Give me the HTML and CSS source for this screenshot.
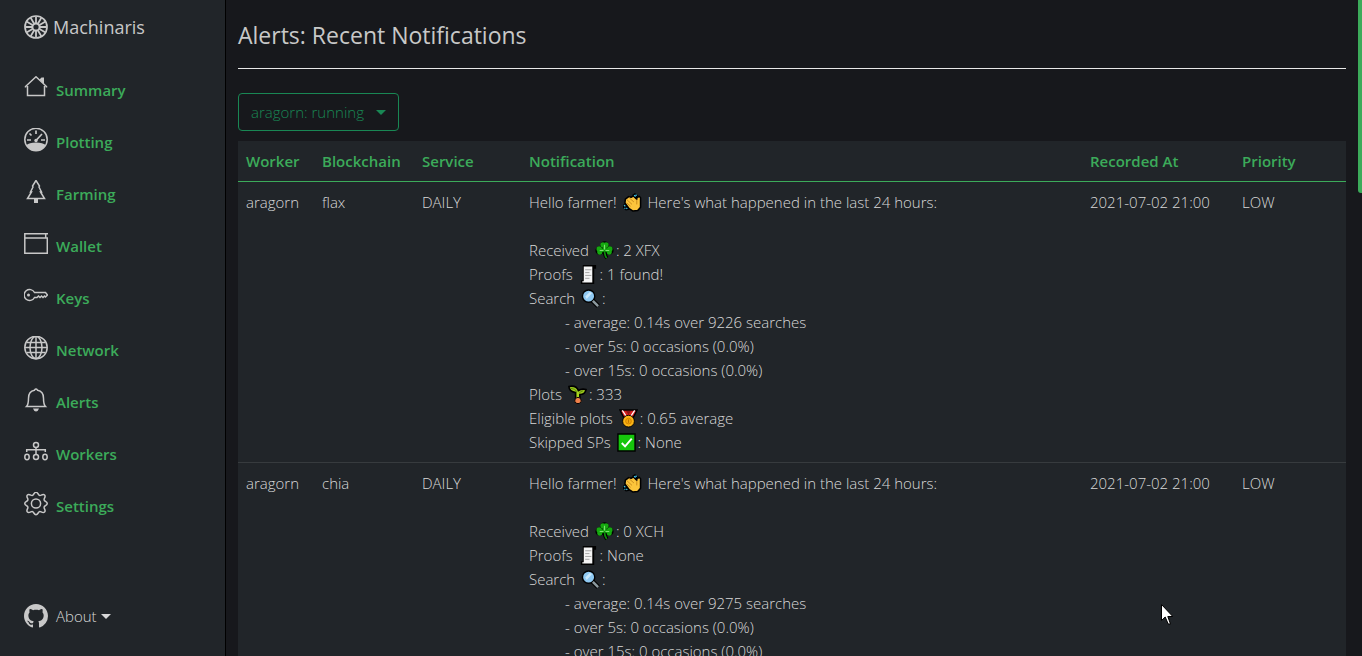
FILE: index.html
```html
<!DOCTYPE html>
<html lang="en">
<head>
<meta charset="utf-8">
<title>Machinaris - Alerts</title>
<link rel="stylesheet" href="styles.css">
</head>
<body>
<svg class="defs" aria-hidden="true">
  <symbol id="clap" viewBox="0 0 20 20">
    <path d="M2.500 6.500 6 3.800 8.500 4.500 11 3l3.500 3.500V5L17 3.500 18.500 5v10l-3 3.500-5 .5-4-2.500-4.500-6z" fill="#fcc53c" stroke="#000" stroke-width="1.600" stroke-linejoin="round"/>
    <path d="m4 7 5.500 5M6.500 5l5 4.500M4 10.500l4 3.500M14.500 7v5" stroke="#c98a1c" stroke-width="1" fill="none"/>
    <path d="m9.500 2 3-2L16 2.500 14 6l-2.500-2z" fill="#000"/>
    <path d="M0 12h3l4 5.500-4 1L0 15.500z" fill="#000"/>
    <path d="m11.700 2.300 1.500 1.500M13.800 1.500v1.700M1 13l1.500 1M3.500 15.700l1 1M1.500 16.300h1" stroke="#3fc6f0" stroke-width="1.300"/>
  </symbol>
  <symbol id="shamrock" viewBox="0 0 20 20">
    <g stroke="#000" stroke-width="2"><circle cx="10" cy="5" r="3.700"/><circle cx="5" cy="10" r="3.600"/><circle cx="15" cy="10" r="3.600"/><path d="M10 10q0 5 2.500 8" fill="none" stroke-width="4"/></g>
    <g fill="#16a810"><circle cx="8.300" cy="4" r="2.700"/><circle cx="11.700" cy="4" r="2.700"/><circle cx="4.400" cy="8.500" r="2.900"/><circle cx="5" cy="11.700" r="2.700"/><circle cx="15.600" cy="8.500" r="2.900"/><circle cx="15" cy="11.700" r="2.700"/><path d="M7 5h6l-1 3 3 0v4l-5-1-5 1V8l3.500 0z"/></g>
    <path d="M10 10q0 5 2.300 8" stroke="#0d8c0b" stroke-width="1.800" fill="none"/>
    <path d="M10 4v5M5 10h4M11 10h4" stroke="#7de070" stroke-width="1.200"/>
  </symbol>
  <symbol id="receipt" viewBox="0 0 20 20">
    <path d="M4 0h14v4h-2v16H2v-4h2z" fill="#000"/>
    <path d="M5 1.500h9v17H3.500V17H5z" fill="#f4f4f4"/>
    <path d="M6.500 5H13M6.500 8H11M6.500 11H13M6.500 14H11" stroke="#a2a2a2"/>
  </symbol>
  <symbol id="lens" viewBox="0 0 20 20">
    <path d="m12 12 6 6" stroke="#000" stroke-width="5"/>
    <circle cx="8" cy="7.500" r="6.500" fill="#8fc9f2" stroke="#000" stroke-width="1.500"/>
    <path d="m4.500 8 5-5 2 1.500-5.500 6z" fill="#c9e8fc"/>
    <path d="m12.500 12.500 5.500 5.500" stroke="#8c999e" stroke-width="2.600"/>
  </symbol>
  <symbol id="seedling" viewBox="0 0 20 20">
    <path d="M1 1.500q8-1.500 10 4.500 3-2.500 8-1.200-1 5.200-6.500 5.200V18H8V8Q1 6.500 1 1.500z" fill="#9fca1c" stroke="#000" stroke-width="1.700"/>
    <path d="M3 3.500q4 0 7 4v5M12 8l4-2" stroke="#5b8b10" fill="none"/>
    <path d="M10.500 7v8" stroke="#a9d51e" stroke-width="2"/>
    <path d="M7 17q0-4 3.500-4t3.500 4l-2 2.500H9z" fill="#f0804a" stroke="#000"/>
  </symbol>
  <symbol id="medal" viewBox="0 0 20 20">
    <path d="M1 1h18l-4 8H5z" fill="#d61f1f" stroke="#000" stroke-width="1.500"/>
    <path d="m3.500 1.500 4 6M16.500 1.500l-4 6" stroke="#fff" stroke-width="1.300"/>
    <path d="M7.500 2h5L10 6z" fill="#8e1515"/>
    <circle cx="10" cy="12.800" r="6.200" fill="#fbb416" stroke="#000" stroke-width="1"/>
    <circle cx="10" cy="12.800" r="3" fill="#f0a30a" stroke="#d08300"/>
    <path d="M10 11v3.500" stroke="#b87400"/>
  </symbol>
  <symbol id="tick" viewBox="0 0 20 20">
    <path d="M1 1h18v18H1z" fill="#16c60c" stroke="#000" stroke-width="1.500"/>
    <path d="m5 10.500 3.500 3.500L15.500 6" fill="none" stroke="#fff" stroke-width="2"/>
  </symbol>
</svg>

<div class="layout">
  <aside class="sidebar">
    <a class="brand" href="#">
      <svg class="icon" viewBox="0 0 24 24"><circle cx="12" cy="12" r="11" stroke-width="1.700"/><path d="M12 1.500V8M12 16v6.500M1.500 12H8M16 12h6.500M6.750 2.900 10 8.500M14 15.500l3.250 5.600M17.250 2.900 14 8.500M10 15.500l-3.250 5.600M2.900 6.750 8.500 10M15.500 14l5.600 3.250M2.900 17.250 8.500 14M15.500 10l5.600-3.250" stroke-width="1.800"/><circle cx="12" cy="12" r="3.600" stroke-width="2"/></svg>
      <span>Machinaris</span>
    </a>
    <nav class="menu">
      <a class="menu-link" href="#"><svg class="icon" viewBox="0 0 24 24"><path d="M3.500 10v9.500h17V10M1.500 11.500v-1L12 .8l10.500 9.700v1"/><path class="solid" d="m15.500 3.500 2-2H20V8z"/></svg>Summary</a>
      <a class="menu-link" href="#"><svg class="icon" viewBox="0 0 24 24"><circle cx="12" cy="11.500" r="11.200"/><path class="solid" d="M2.500 17Q5 14.500 12 14.500t9.500 2.500q-3 5.800-9.500 5.800T2.500 17z"/><path d="M12 2.500V6M5.500 5.500l2 2M3 12h4M17 12h4M11.500 13 18 6" stroke-width="1.700"/><circle class="solid" cx="12" cy="12.500" r="1.700"/></svg>Plotting</a>
      <a class="menu-link" href="#"><svg class="icon" viewBox="0 0 24 24"><path d="M12 .5 8.500 6l.5 1-2.500 5h1l-4 6.500h17L16.500 12h1L15 7l.5-1z"/><path class="solid" d="M10 19h4v4h-4z"/></svg>Farming</a>
      <a class="menu-link" href="#"><svg class="icon" viewBox="0 0 24 24"><path d="M.8 1V21.300h22.500V6H1.500M.8 1.700H24M21.700 2v4"/></svg>Wallet</a>
      <a class="menu-link" href="#"><svg class="icon" viewBox="0 0 24 24"><path d="M10.500 8.500h11l2 2.500-2 2-1-1-1.500 1.500-1.500-1.500-1.500 1.500-1.500-1.500-1.500 1.500h-2.500A5.500 5.500 0 1 1 10.500 8.500z"/><circle class="solid" cx="4.500" cy="11" r="1.500"/></svg>Keys</a>
      <a class="menu-link" href="#"><svg class="icon" viewBox="0 0 24 24"><circle cx="12" cy="11.500" r="11.200"/><ellipse cx="12" cy="11.500" rx="6" ry="11.200"/><path d="M12 .5v22M1 11.500h22M2.500 6.500h19M2.500 16.500h19"/></svg>Network</a>
      <a class="menu-link" href="#"><svg class="icon" viewBox="0 0 24 24"><path d="M2.500 18.500h19q-2-2-2-8.300 0-7.200-6-8Q12 0 10.500 2.200q-6 .8-6 8 0 6.300-2 8.300z"/><path class="solid" d="M9 20.500h6q-1 3-3 3t-3-3z"/></svg>Alerts</a>
      <a class="menu-link" href="#"><svg class="icon" viewBox="0 0 24 24"><circle cx="12" cy="5" r="2.500"/><path d="M12 7.500v7M2.700 12V9.700h18.600V12"/><ellipse cx="3" cy="17" rx="2.200" ry="2.700"/><circle cx="12" cy="17" r="2.500"/><ellipse cx="21" cy="17" rx="2.200" ry="2.700"/></svg>Workers</a>
      <a class="menu-link" href="#"><svg class="icon" viewBox="0 0 24 24"><circle cx="12" cy="11.500" r="4.600"/><path transform="translate(0 -.5)" d="M9.800 2.500q2.200-3.500 4.400 0 .7 2 3 1.100c3-1.700 4.900.2 3.200 3.200q-.9 2.300 1.100 3 3.500 2.200 0 4.400-2 .7-1.100 3c1.700 3-.2 4.900-3.200 3.200q-2.300-.9-3 1.100-2.200 3.500-4.400 0-.7-2-3-1.100c-3 1.700-4.900-.2-3.200-3.200q.9-2.300-1.100-3-3.500-2.200 0-4.400 2-.7 1.100-3c-1.700-3 .2-4.900 3.200-3.200q2.300.9 3-1.100z"/></svg>Settings</a>
    </nav>
    <button class="about" type="button">
      <svg class="icon" viewBox="0 0 16 16"><path class="octo" d="M8 0C3.580 0 0 3.580 0 8c0 3.540 2.290 6.530 5.470 7.590.4.070.55-.17.55-.38 0-.19-.01-.82-.01-1.490-2.010.37-2.530-.49-2.690-.94-.09-.23-.48-.94-.82-1.130-.28-.15-.68-.52-.01-.53.63-.01 1.080.58 1.230.82.72 1.210 1.870.87 2.330.66.07-.52.28-.87.51-1.070-1.780-.2-3.640-.89-3.640-3.950 0-.87.31-1.590.82-2.150-.08-.2-.36-1.020.08-2.120 0 0 .67-.21 2.200.82.64-.18 1.320-.27 2-.27s1.360.09 2 .27c1.530-1.040 2.200-.82 2.200-.82.44 1.100.16 1.920.08 2.120.51.56.82 1.270.82 2.150 0 3.070-1.870 3.750-3.650 3.950.29.25.54.73.54 1.480 0 1.070-.01 1.930-.01 2.200 0 .21.15.46.55.38A8.010 8.010 0 0 0 16 8c0-4.420-3.580-8-8-8z"/></svg>
      <span>About</span><span class="caret"></span>
    </button>
  </aside>

  <main class="content">
    <h1 class="title">Alerts: Recent Notifications</h1>
    <button class="worker-button" type="button">aragorn: running<span class="caret"></span></button>
    <table class="alerts">
      <thead>
        <tr>
          <th class="col-worker">Worker</th><th class="col-chain">Blockchain</th><th class="col-service">Service</th><th>Notification</th><th class="col-date">Recorded At</th><th class="col-priority">Priority</th>
        </tr>
      </thead>
      <tbody>
        <tr>
          <td>aragorn</td><td>flax</td><td>DAILY</td>
          <td>
            <p class="greeting">Hello farmer! <svg class="emoji"><use href="#clap"/></svg> Here's what happened in the last 24 hours:</p>
            <p>Received <svg class="emoji"><use href="#shamrock"/></svg>: 2 XFX</p>
            <p>Proofs <svg class="emoji"><use href="#receipt"/></svg>: 1 found!</p>
            <p>Search <svg class="emoji"><use href="#lens"/></svg>:</p>
            <p class="detail">- average: 0.14s over 9226 searches</p>
            <p class="detail">- over 5s: 0 occasions (0.0%)</p>
            <p class="detail">- over 15s: 0 occasions (0.0%)</p>
            <p>Plots <svg class="emoji"><use href="#seedling"/></svg>: 333</p>
            <p>Eligible plots <svg class="emoji"><use href="#medal"/></svg>: 0.65 average</p>
            <p>Skipped SPs <svg class="emoji"><use href="#tick"/></svg>: None</p>
          </td>
          <td>2021-07-02 21:00</td><td>LOW</td>
        </tr>
        <tr>
          <td>aragorn</td><td>chia</td><td>DAILY</td>
          <td>
            <p class="greeting">Hello farmer! <svg class="emoji"><use href="#clap"/></svg> Here's what happened in the last 24 hours:</p>
            <p>Received <svg class="emoji"><use href="#shamrock"/></svg>: 0 XCH</p>
            <p>Proofs <svg class="emoji"><use href="#receipt"/></svg>: None</p>
            <p>Search <svg class="emoji"><use href="#lens"/></svg>:</p>
            <p class="detail">- average: 0.14s over 9275 searches</p>
            <p class="detail">- over 5s: 0 occasions (0.0%)</p>
            <p class="detail">- over 15s: 0 occasions (0.0%)</p>
          </td>
          <td>2021-07-02 21:00</td><td>LOW</td>
        </tr>
      </tbody>
    </table>
  </main>
</div>
<div class="scroll-thumb"></div>
<svg class="pointer" viewBox="0 0 12 21"><path d="M.5.500v16l3.700-3.500 3 7h2.300l-2.700-7.500h5z"/></svg>
</body>
</html>
```

FILE: styles.css
```css
* { box-sizing: border-box; }

body {
  margin: 0;
  background: #17181c;
  color: #d8d8d8;
  font: 300 15px/24px "Open Sans", "Noto Sans", sans-serif;
}

a { text-decoration: none; }
p { margin: 0; }
button { font: inherit; cursor: pointer; }

.defs { display: none; }

.layout {
  display: flex;
  height: 100vh;
}

.sidebar {
  display: flex;
  flex-direction: column;
  flex: 0 0 226px;
  padding: 12px 24px 28px;
  background: #212529;
  border-right: 1px solid #000;
}

.brand {
  display: flex;
  align-items: center;
  gap: 5px;
  height: 30px;
  color: #c8c8c8;
  font-size: 18px;
  font-weight: 400;
}

.menu {
  display: flex;
  flex-direction: column;
  gap: 24px;
  margin-top: 34px;
}

.menu-link {
  display: flex;
  align-items: center;
  gap: 8px;
  color: #3cab5a;
  font-weight: 600;
}

.icon {
  flex: none;
  width: 24px;
  height: 24px;
  fill: none;
  stroke: #c8c8c8;
  stroke-width: 1.5;
}

.menu-link .icon { margin-bottom: 4px; }
.icon .solid { fill: #c8c8c8; stroke: none; }
.icon .octo { fill: #c8c8c8; stroke: none; }

.about {
  display: flex;
  align-items: center;
  align-self: flex-start;
  gap: 8px;
  margin-top: auto;
  padding: 0;
  border: 0;
  background: none;
  color: #d8d8d8;
}

.caret {
  display: inline-block;
  border: 5px solid transparent;
  border-top-color: currentColor;
  border-bottom: 0;
}

.about .caret { margin-left: -4px; }

.content {
  flex: 1;
  min-width: 0;
  padding: 16px 16px 0 12px;
  overflow-y: auto;
  scrollbar-width: none;
}

.title {
  margin: 0 0 24px;
  padding: 3px 0 17px;
  border-bottom: 1px solid #e8e8e8;
  color: #c8c8c8;
  font-size: 23px;
  font-weight: 400;
  line-height: 32px;
}

.worker-button {
  display: flex;
  align-items: center;
  gap: 12px;
  height: 38px;
  margin-bottom: 10px;
  padding: 0 12px;
  border: 1px solid #198754;
  border-radius: 4px;
  background: none;
  color: #198754;
}

.alerts {
  width: 100%;
  table-layout: fixed;
  border-collapse: separate;
  border-spacing: 0;
  background: #212529;
}

.alerts th,
.alerts td {
  padding: 8px;
  border-bottom: 1px solid #373b3e;
  text-align: left;
  vertical-align: top;
}

.alerts th {
  border-bottom-color: #3cab5a;
  color: #3cab5a;
  font-weight: 600;
}

.col-worker { width: 76px; }
.col-chain { width: 100px; }
.col-service { width: 107px; }
.col-date { width: 152px; }
.col-priority { width: 112px; }

.greeting { margin-bottom: 24px; }
.detail { padding-left: 36px; }

.emoji {
  width: 19px;
  height: 19px;
  margin: 0 2px;
  vertical-align: -4px;
}

.scroll-thumb {
  position: fixed;
  top: 0;
  right: 0;
  width: 4px;
  height: 193px;
  border-radius: 0 0 0 3px;
  background: #3cab5a;
}

.pointer {
  position: fixed;
  top: 604px;
  left: 1161px;
  width: 12px;
  height: 21px;
  fill: #fff;
  stroke: #000;
}
```
